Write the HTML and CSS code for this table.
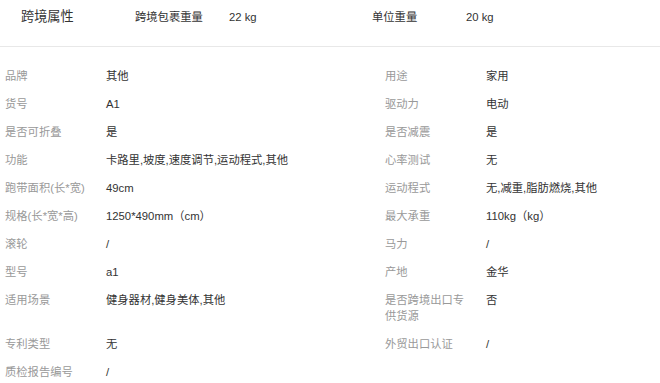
FILE: index.html
```html
<!DOCTYPE html>
<html lang="zh-CN">
<head>
<meta charset="utf-8">
<title>跨境属性</title>
<link rel="stylesheet" href="styles.css">
</head>
<body>
<div class="page">
  <div class="cb-head">
    <div class="cb-title">跨境属性</div>
    <div class="cb-label">跨境包裹重量</div>
    <div class="cb-value">22 kg</div>
    <div class="cb-label">单位重量</div>
    <div class="cb-value">20 kg</div>
  </div>
  <div class="attrs">
    <div class="attr"><div class="attr-name">品牌</div><div class="attr-val">其他</div></div>
    <div class="attr"><div class="attr-name">用途</div><div class="attr-val">家用</div></div>
    <div class="attr"><div class="attr-name">货号</div><div class="attr-val">A1</div></div>
    <div class="attr"><div class="attr-name">驱动力</div><div class="attr-val">电动</div></div>
    <div class="attr"><div class="attr-name">是否可折叠</div><div class="attr-val">是</div></div>
    <div class="attr"><div class="attr-name">是否减震</div><div class="attr-val">是</div></div>
    <div class="attr"><div class="attr-name">功能</div><div class="attr-val">卡路里,坡度,速度调节,运动程式,其他</div></div>
    <div class="attr"><div class="attr-name">心率测试</div><div class="attr-val">无</div></div>
    <div class="attr"><div class="attr-name">跑带面积(长*宽)</div><div class="attr-val">49cm</div></div>
    <div class="attr"><div class="attr-name">运动程式</div><div class="attr-val">无,减重,脂肪燃烧,其他</div></div>
    <div class="attr"><div class="attr-name">规格(长*宽*高)</div><div class="attr-val">1250*490mm（cm）</div></div>
    <div class="attr"><div class="attr-name">最大承重</div><div class="attr-val">110kg（kg）</div></div>
    <div class="attr"><div class="attr-name">滚轮</div><div class="attr-val">/</div></div>
    <div class="attr"><div class="attr-name">马力</div><div class="attr-val">/</div></div>
    <div class="attr"><div class="attr-name">型号</div><div class="attr-val">a1</div></div>
    <div class="attr"><div class="attr-name">产地</div><div class="attr-val">金华</div></div>
    <div class="attr"><div class="attr-name">适用场景</div><div class="attr-val">健身器材,健身美体,其他</div></div>
    <div class="attr"><div class="attr-name">是否跨境出口专供货源</div><div class="attr-val">否</div></div>
    <div class="attr"><div class="attr-name">专利类型</div><div class="attr-val">无</div></div>
    <div class="attr"><div class="attr-name">外贸出口认证</div><div class="attr-val">/</div></div>
    <div class="attr"><div class="attr-name">质检报告编号</div><div class="attr-val">/</div></div>
  </div>
</div>
</body>
</html>
```
FILE: styles.css
```css
html, body {
  margin: 0;
  padding: 0;
  background: #fff;
}
body {
  font-family: "Liberation Sans", "Noto Sans CJK SC", Arial, sans-serif;
  font-size: 11.3px;
  color: #333;
  overflow: hidden;
}
.page {
  width: 760px;
}
.cb-head {
  display: flex;
  align-items: baseline;
  padding: 7px 0 19px 21px;
  line-height: 20px;
  border-bottom: 1px solid #e8e8e8;
  width: 639px;
}
.cb-title {
  width: 114px;
  font-size: 13.2px;
  color: #333;
}
.cb-label {
  width: 94px;
  color: #333;
}
.cb-value {
  width: 143px;
  color: #333;
}
.attrs {
  display: grid;
  grid-template-columns: 380px 380px;
  margin-top: 15px;
}
.attr {
  display: flex;
  align-items: flex-start;
  padding: 6px 0;
  line-height: 16px;
}
.attr-name {
  width: 86px;
  padding: 0 15px 0 5px;
  flex: none;
  color: #999;
}
.attr-val {
  flex: 1;
  color: #333;
}
```
